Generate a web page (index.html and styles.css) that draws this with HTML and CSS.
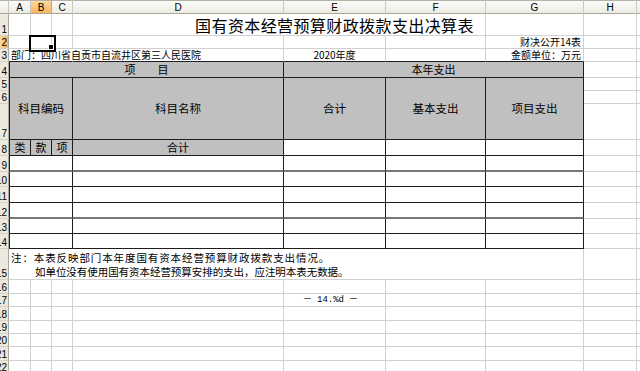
FILE: index.html
```html
<!DOCTYPE html>
<html lang="zh-CN">
<head>
<meta charset="utf-8">
<title>国有资本经营预算财政拨款支出决算表</title>
<link rel="stylesheet" href="styles.css">
</head>
<body>
<div class="sheet">
  <!-- column headers -->
  <div class="ch corner"></div>
  <div class="ch">A</div><div class="ch sel">B</div><div class="ch">C</div><div class="ch">D</div><div class="ch">E</div><div class="ch">F</div><div class="ch">G</div><div class="ch">H</div><div class="ch tail"></div>

  <!-- row 1 -->
  <div class="rh"><span>1</span></div>
  <div class="c"></div><div class="c"></div><div class="c"></div><div class="c nr"></div>
  <div class="c nr title">国有资本经营预算财政拨款支出决算表</div>
  <div class="c"></div><div class="c"></div><div class="c"></div><div class="c tail"></div>

  <!-- row 2 -->
  <div class="rh sel"><span>2</span></div>
  <div class="c"></div><div class="c cur"></div><div class="c"></div><div class="c"></div><div class="c"></div><div class="c"></div>
  <div class="c right">财决公开14表</div>
  <div class="c"></div><div class="c tail"></div>

  <!-- row 3 -->
  <div class="rh"><span>3</span></div>
  <div class="c nr bb left">部门：四川省自贡市自流井区第三人民医院</div>
  <div class="c nr bb"></div><div class="c nr bb"></div><div class="c bb"></div>
  <div class="c bb center">2020年度</div>
  <div class="c bb"></div>
  <div class="c bb right">金额单位：万元</div>
  <div class="c"></div><div class="c tail"></div>

  <!-- row 4 -->
  <div class="rh"><span>4</span></div>
  <div class="c s4 gray bl br bb center hd">项　　目</div>
  <div class="c s3 gray br bb center hd">本年支出</div>
  <div class="c"></div><div class="c tail"></div>

  <!-- rows 5-7 -->
  <div class="rh"><span>5</span></div>
  <div class="c s3 r3 gray bl br bb center hd2">科目编码</div>
  <div class="c r3 gray br bb center hd2">科目名称</div>
  <div class="c r3 gray br bb center hd2">合计</div>
  <div class="c r3 gray br bb center hd2">基本支出</div>
  <div class="c r3 gray br bb center hd2">项目支出</div>
  <div class="c"></div><div class="c tail"></div>
  <div class="rh"><span>6</span></div>
  <div class="c"></div><div class="c tail"></div>
  <div class="rh"><span>7</span></div>
  <div class="c"></div><div class="c tail"></div>

  <!-- row 8 -->
  <div class="rh"><span>8</span></div>
  <div class="c gray bl br bb center hd">类</div>
  <div class="c gray br bb center hd">款</div>
  <div class="c gray br bb center hd">项</div>
  <div class="c gray br bb center hd">合计</div>
  <div class="c br bb"></div><div class="c br bb"></div><div class="c br bb"></div>
  <div class="c"></div><div class="c tail"></div>

  <!-- row 9 -->
  <div class="rh"><span>9</span></div>
  <div class="c s3 bl br bb2"></div><div class="c br bb2"></div><div class="c br bb2"></div><div class="c br bb2"></div><div class="c br bb2"></div>
  <div class="c"></div><div class="c tail"></div>
  <!-- row 10 -->
  <div class="rh"><span>10</span></div>
  <div class="c s3 bl br bb"></div><div class="c br bb"></div><div class="c br bb"></div><div class="c br bb"></div><div class="c br bb"></div>
  <div class="c"></div><div class="c tail"></div>
  <!-- row 11 -->
  <div class="rh"><span>11</span></div>
  <div class="c s3 bl br bb"></div><div class="c br bb"></div><div class="c br bb"></div><div class="c br bb"></div><div class="c br bb"></div>
  <div class="c"></div><div class="c tail"></div>
  <!-- row 12 -->
  <div class="rh"><span>12</span></div>
  <div class="c s3 bl br bb2"></div><div class="c br bb2"></div><div class="c br bb2"></div><div class="c br bb2"></div><div class="c br bb2"></div>
  <div class="c"></div><div class="c tail"></div>
  <!-- row 13 -->
  <div class="rh"><span>13</span></div>
  <div class="c s3 bl br bb"></div><div class="c br bb"></div><div class="c br bb"></div><div class="c br bb"></div><div class="c br bb"></div>
  <div class="c"></div><div class="c tail"></div>
  <!-- row 14 -->
  <div class="rh"><span>14</span></div>
  <div class="c s3 bl br bb"></div><div class="c br bb"></div><div class="c br bb"></div><div class="c br bb"></div><div class="c br bb"></div>
  <div class="c"></div><div class="c tail"></div>

  <!-- row 15 -->
  <div class="rh"><span>15</span></div>
  <div class="c s7 note">
    <div class="note-line wide">注：本表反映部门本年度国有资本经营预算财政拨款支出情况。</div>
    <div class="note-line indent">如单位没有使用国有资本经营预算安排的支出，应注明本表无数据。</div>
  </div>
  <div class="c"></div><div class="c tail"></div>

  <!-- rows 16-22 -->
  <div class="rh"><span>16</span></div>
  <div class="c"></div><div class="c"></div><div class="c"></div><div class="c"></div><div class="c"></div><div class="c"></div><div class="c"></div><div class="c"></div><div class="c tail"></div>
  <div class="rh"><span>17</span></div>
  <div class="c"></div><div class="c"></div><div class="c"></div><div class="c"></div>
  <div class="c center page">－ 14.%d －</div>
  <div class="c"></div><div class="c"></div><div class="c"></div><div class="c tail"></div>
  <div class="rh"><span>18</span></div>
  <div class="c"></div><div class="c"></div><div class="c"></div><div class="c"></div><div class="c"></div><div class="c"></div><div class="c"></div><div class="c"></div><div class="c tail"></div>
  <div class="rh"><span>19</span></div>
  <div class="c"></div><div class="c"></div><div class="c"></div><div class="c"></div><div class="c"></div><div class="c"></div><div class="c"></div><div class="c"></div><div class="c tail"></div>
  <div class="rh"><span>20</span></div>
  <div class="c"></div><div class="c"></div><div class="c"></div><div class="c"></div><div class="c"></div><div class="c"></div><div class="c"></div><div class="c"></div><div class="c tail"></div>
  <div class="rh"><span>21</span></div>
  <div class="c"></div><div class="c"></div><div class="c"></div><div class="c"></div><div class="c"></div><div class="c"></div><div class="c"></div><div class="c"></div><div class="c tail"></div>
  <div class="rh"><span>22</span></div>
  <div class="c"></div><div class="c"></div><div class="c"></div><div class="c"></div><div class="c"></div><div class="c"></div><div class="c"></div><div class="c"></div><div class="c tail"></div>
</div>
</body>
</html>
```

FILE: styles.css
```css
* { box-sizing: border-box; margin: 0; padding: 0; }
html, body { width: 640px; height: 371px; overflow: hidden; background: #fff; }
body {
  font-family: "Noto Sans CJK SC", "Noto Sans", sans-serif;
  font-size: 10px;
  color: #000;
}

.sheet {
  display: grid;
  grid-template-columns: 9px 22px 21px 21px 211px 102px 100px 98px 53px 3px;
  grid-template-rows: 14px 22px 13px 13px 16px 13px 13px 36px 16px 16px 15px 16px 16px 15px 15px 31px 14px 13px 14px 13px 13px 14px 13px;
}

/* column headers */
.ch {
  display: flex;
  align-items: center;
  justify-content: center;
  background: linear-gradient(#fbfbf9, #ecebe3);
  border-top: 1px solid #b4b2a6;
  border-right: 1px solid #cbc8bb;
  border-bottom: 1px solid #aca899;
  font-family: "Liberation Sans", Arial, sans-serif;
  font-size: 10px;
  line-height: 1;
  padding-top: 1px;
}
.ch.sel { background: linear-gradient(#fcd9a0, #f6b660); border-right-color: #d9a258; }
.ch.tail { border-right: none; }

/* row headers */
.rh {
  display: flex;
  justify-content: flex-end;
  align-items: flex-end;
  overflow: hidden;
  background: #ebe9df;
  border-right: 1px solid #aca899;
  border-bottom: 1px solid #d6d3c6;
  font-family: "Liberation Sans", Arial, sans-serif;
  font-size: 10px;
  line-height: 11px;
  padding-right: 1px;
}
.rh span { flex: none; }
.rh.sel { background: linear-gradient(90deg, #fcd9a0, #f6b660); }

/* cells */
.c {
  display: flex;
  align-items: center;
  white-space: nowrap;
  min-width: 0;
  line-height: 1;
  border-right: 1px solid #d0d0d0;
  border-bottom: 1px solid #d0d0d0;
}
.c.tail { border-right: none; }
.nr { border-right-color: transparent; }
.bb { border-bottom-color: #1e1e1e; }
.bb2 { border-bottom: 2px solid #777; }
.br { border-right-color: #1e1e1e; }
.bl { border-left: 1px solid #1e1e1e; }
.gray { background: #c0c0c0; }

.s3 { grid-column: span 3; }
.s4 { grid-column: span 4; }
.s7 { grid-column: span 7; }
.r3 { grid-row: span 3; }

.center { justify-content: center; }
.right { justify-content: flex-end; padding-right: 2px; }
.left { padding-left: 2px; }

.title {
  justify-content: center;
  font-size: 16px;
  letter-spacing: 0.4px;
  padding-top: 1px;
}
.hd { font-size: 11px; }
.hd2 { font-size: 11.5px; }

/* current cell */
.cur { position: relative; }
.cur::after {
  content: "";
  position: absolute;
  left: -2px;
  top: -1px;
  width: 23px;
  height: 13px;
  border: 2px solid #000;
}
.cur::before {
  content: "";
  position: absolute;
  right: -3px;
  bottom: -2px;
  width: 4px;
  height: 4px;
  background: #000;
  border: 1px solid #fff;
  z-index: 1;
}

/* note */
.note {
  flex-direction: column;
  align-items: flex-start;
  justify-content: center;
  gap: 1px;
  padding-left: 2px;
  font-size: 10.5px;
}
.note-line { line-height: 13px; }
.wide { letter-spacing: 0.9px; }
.indent { padding-left: 24px; letter-spacing: -0.05px; }

.page {
  font-family: "Liberation Mono", monospace;
  font-size: 9px;
  padding-right: 8px;
}
```
